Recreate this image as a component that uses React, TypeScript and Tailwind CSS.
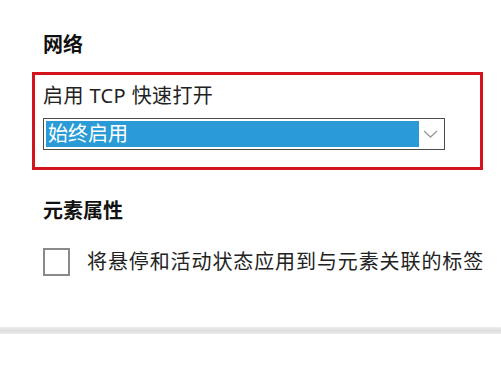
import React from 'react';

const font = { fontFamily: '"Noto Sans", "Noto Sans CJK SC", sans-serif' };

const Chevron: React.FC = () => (
  <svg width="15" height="8" viewBox="0 0 15 8" fill="none">
    <path d="M1 1l6.5 6L14 1" stroke="#9a9a9a" strokeWidth="1.3" />
  </svg>
);

const App: React.FC = () => {
  return (
    <div className="w-[501px] h-[375px] bg-white overflow-hidden" style={font}>
      <div className="flex flex-col pt-[31px]">
        {/* 网络 */}
        <h2 className="pl-[43px] text-[20px] leading-[28px] font-bold text-[#111]">网络</h2>

        <div className="ml-[32px] mt-[13px] w-[451px] border-[3px] border-[#d3141d] pl-[8px] pt-[7px] pb-[17px]">
          <p className="text-[20px] leading-[28px] text-[#222] tracking-[0.4px]">启用 TCP 快速打开</p>
          <div className="mt-[8px] w-[402px] h-[32px] border border-[#4a4a4a] p-[2px] flex">
            <div className="w-[373px] h-full bg-[#2a9bd7] flex items-center pl-[2px]">
              <span className="text-[20px] leading-none text-white">始终启用</span>
            </div>
            <div className="flex-1 flex items-center justify-center">
              <Chevron />
            </div>
          </div>
        </div>

        {/* 元素属性 */}
        <h2 className="pl-[43px] mt-[27px] text-[20px] leading-[28px] font-bold text-[#111]">元素属性</h2>

        <div className="pl-[43px] mt-[23px] flex items-center gap-[17px]">
          <div className="w-[27px] h-[28px] border-2 border-[#8a8a8a] bg-white" />
          <span className="text-[20px] leading-[28px] text-[#222] tracking-[0.9px]">将悬停和活动状态应用到与元素关联的标签</span>
        </div>

        <div className="mt-[51px] h-[7px] w-full bg-gradient-to-b from-[#eeeeee] via-[#dddddd] to-[#ececec]" />
      </div>
    </div>
  );
};

export default App;
